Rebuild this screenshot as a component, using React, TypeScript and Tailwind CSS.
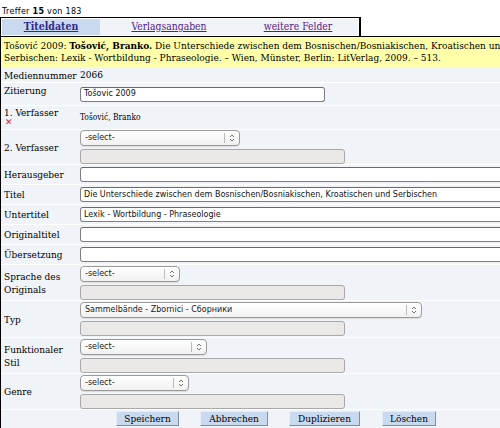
import React from "react";

const serif = "font-['DejaVu_Serif_Condensed','DejaVu_Serif',serif]";

function Arrow() {
  return (
    <svg width="6" height="8" viewBox="0 0 6 8" className="block">
      <path d="M1 3 L3 1 L5 3" fill="none" stroke="#666" strokeWidth="0.9" />
      <path d="M1 5 L3 7 L5 5" fill="none" stroke="#666" strokeWidth="0.9" />
    </svg>
  );
}

function Select({ w, text = "-select-" }: { w: string; text?: string }) {
  return (
    <div
      className={`${w} h-[16px] rounded-[4px] border border-[#9a9a9a] bg-gradient-to-b from-white to-[#f1f1f1] flex items-center font-['DejaVu_Sans',sans-serif] text-[8px] text-[#222] shadow-[0_1px_0_#ddd]`}
    >
      <span className="flex-1 pl-[4px] truncate">{text}</span>
      <span className="w-px h-[10px] bg-[#bbb]" />
      <span className="w-[14px] flex justify-center">
        <Arrow />
      </span>
    </div>
  );
}

function Disabled() {
  return <div className="w-[265px] h-[15px] rounded-[3px] border border-[#a8a8a8] bg-[#ebe9e7]" />;
}

function TextInput({ w = "w-[450px]", value = "" }: { w?: string; value?: string }) {
  return (
    <div
      className={`${w} h-[15px] rounded-[3px] border border-[#7f7f7f] border-t-[#6a6a6a] bg-white flex items-center pl-[3px] font-['DejaVu_Sans',sans-serif] text-[8px] text-[#111] whitespace-nowrap overflow-hidden`}
    >
      {value}
    </div>
  );
}

function Row({
  h,
  label,
  children,
  top,
}: {
  h: string;
  label: React.ReactNode;
  children?: React.ReactNode;
  top?: boolean;
}) {
  return (
    <div className={`flex ${h} bg-[#f0f4f8]`}>
      <div className={`w-[79px] shrink-0 pl-[3px] flex ${top ? "items-start pt-[1px]" : "items-center"} leading-[13px]`}>
        {label}
      </div>
      <div className="flex-1 flex flex-col justify-center gap-[3px]">{children}</div>
    </div>
  );
}

function Btn({ children, w }: { children: React.ReactNode; w: string }) {
  return (
    <div
      className={`${w} h-[15px] bg-[#c9d9ef] border border-t-[#e8eef8] border-l-[#e8eef8] border-b-[#7d8ea6] border-r-[#7d8ea6] flex items-center justify-center text-[10px] text-black`}
    >
      {children}
    </div>
  );
}

export default function App() {
  return (
    <div className={`w-[500px] h-[428px] overflow-hidden bg-white ${serif} text-[10px] text-black`}>
      <div className="w-[560px]">
        <div className="h-[17px] flex items-end pl-[2px] pb-[1px] font-['DejaVu_Sans',sans-serif] text-[8px] leading-none tracking-[0.3px]">
          Treffer&nbsp;<b>15</b>&nbsp;von 183
        </div>
        <div className="w-[361px] h-[19px] border-t border-l border-r-2 border-black flex p-[1px] pl-[1px] gap-0 text-[10.3px]">
          <div className="w-[98px] bg-[#c9d9ef] flex items-center justify-center font-bold underline text-[#2e2a8c] text-[10.5px]">
            Titeldaten
          </div>
          <div className="w-[138px] bg-[#f0f3f7] flex items-center justify-center underline text-[#551a8b]">
            Verlagsangaben
          </div>
          <div className="flex-1 bg-[#f0f3f7] flex items-center justify-center underline text-[#551a8b]">
            weitere Felder
          </div>
        </div>
        <div className="border-t border-l border-black">
          <div className="h-[31px] bg-[#ffffaa] pl-[3px] pt-[3px] leading-[12px] whitespace-nowrap">
            Tošović 2009: <b>Tošović, Branko.</b> Die Unterschiede zwischen dem Bosnischen/Bosniakischen, Kroatischen und
            <br />
            Serbischen: Lexik - Wortbildung - Phraseologie. – Wien, Münster, Berlin: LitVerlag, 2009. – 513.
          </div>
          <div className="flex flex-col gap-[1px] bg-white">
            <Row h="h-[14px]" label="Mediennummer">
              <div className="leading-none">2066</div>
            </Row>
            <Row h="h-[22px]" label="Zitierung" top>
              <TextInput w="w-[245px]" value="Tošovic 2009" />
            </Row>
            <Row
              h="h-[23px]"
              top
              label={
                <div className="flex flex-col leading-[10px] pt-[1px]">
                  <span>1. Verfasser</span>
                  <span className="text-[#d22] font-['DejaVu_Sans',sans-serif] text-[9px] leading-[9px] pl-[1px]">✕</span>
                </div>
              }
            >
              <div className="leading-none text-[8.4px]">Tošović, Branko</div>
            </Row>
            <Row h="h-[34px]" label="2. Verfasser">
              <Select w="w-[160px]" />
              <Disabled />
            </Row>
            <Row h="h-[19px]" label="Herausgeber">
              <TextInput />
            </Row>
            <Row h="h-[19px]" label="Titel">
              <TextInput value="Die Unterschiede zwischen dem Bosnischen/Bosniakischen, Kroatischen und Serbischen" />
            </Row>
            <Row h="h-[19px]" label="Untertitel">
              <TextInput value="Lexik - Wortbildung - Phraseologie" />
            </Row>
            <Row h="h-[19px]" label="Originaltitel">
              <TextInput />
            </Row>
            <Row h="h-[19px]" label="Übersetzung">
              <TextInput />
            </Row>
            <Row h="h-[35px]" label={<span>Sprache des<br />Originals</span>}>
              <Select w="w-[100px]" />
              <Disabled />
            </Row>
            <Row h="h-[36px]" label="Typ">
              <Select w="w-[342px]" text="Sammelbände - Zbornici - Сборники" />
              <Disabled />
            </Row>
            <Row h="h-[35px]" label={<span>Funktionaler<br />Stil</span>}>
              <Select w="w-[127px]" />
              <Disabled />
            </Row>
            <Row h="h-[35px]" label="Genre">
              <Select w="w-[109px]" />
              <Disabled />
            </Row>
            <div className="h-[20px] bg-[#f0f4f8] flex items-start pt-[1px]">
              <div className="w-[115px]" />
              <Btn w="w-[63px]">Speichern</Btn>
              <div className="w-[21px]" />
              <Btn w="w-[68px]">Abbrechen</Btn>
              <div className="w-[21px]" />
              <Btn w="w-[71px]">Duplizieren</Btn>
              <div className="w-[22px]" />
              <Btn w="w-[54px]">Löschen</Btn>
            </div>
          </div>
        </div>
      </div>
    </div>
  );
}
